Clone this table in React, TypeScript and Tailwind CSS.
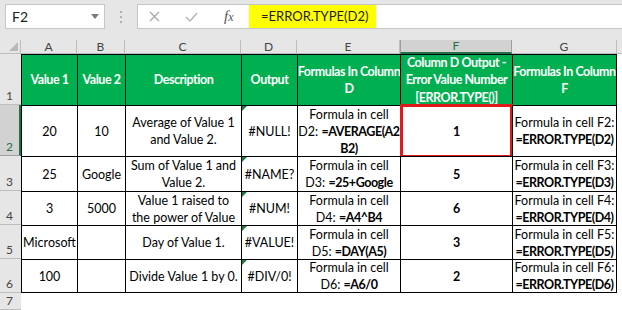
import React from "react";

type Line = React.ReactNode;

const COLS = "grid-cols-[21px_56px_48px_116px_56px_103px_112px_105px_1fr]";
const ROWS = "grid-rows-[14px_51px_51px_35px_34px_34px_34px_17px]";

function Lines({ lines }: { lines: Line[] }) {
  return (
    <div className="flex flex-col items-center">
      {lines.map((l, i) => (
        <span key={i} className="whitespace-nowrap">
          {l}
        </span>
      ))}
    </div>
  );
}

function B({ children }: { children: React.ReactNode }) {
  return <b className="font-bold tracking-[-0.45px]">{children}</b>;
}

function ColHead({ label, selected }: { label: string; selected?: boolean }) {
  return (
    <div
      className={
        selected
          ? "flex items-center justify-center bg-[#d2d2d2] border-l border-r border-[#9f9f9f] border-b-2 border-b-[#217346] text-[#217346] text-[12px]"
          : "flex items-center justify-center bg-[#e6e6e6] border-r border-[#bdbdbd] border-b border-b-[#bdbdbd] text-[#444] text-[12px]"
      }
    >
      {label}
    </div>
  );
}

function RowHead({ label, selected }: { label: string; selected?: boolean }) {
  return (
    <div
      className={
        selected
          ? "flex items-end pl-[6px] pb-[1px] bg-[#d2d2d2] border-b border-[#9f9f9f] border-r-2 border-r-[#217346] text-[#217346] text-[12px] leading-[14px]"
          : "flex items-end pl-[6px] pb-[1px] bg-[#e6e6e6] border-b border-[#bdbdbd] text-[#444] text-[12px] leading-[14px]"
      }
    >
      {label}
    </div>
  );
}

function HeadCell({ lines, last }: { lines: Line[]; last?: boolean }) {
  return (
    <div
      className={
        "flex items-center justify-center overflow-hidden bg-[#00b050] text-white font-bold tracking-[-0.45px] text-center leading-[17.5px] border-l border-t border-black" +
        (last ? " border-r" : "")
      }
    >
      <Lines lines={lines} />
    </div>
  );
}

function DataCell({
  lines,
  last,
  bottom,
  flag,
  bold,
  children,
}: {
  lines: Line[];
  last?: boolean;
  bottom?: boolean;
  flag?: boolean;
  bold?: boolean;
  children?: React.ReactNode;
}) {
  return (
    <div
      className={
        "relative flex items-center justify-center bg-white text-black text-center leading-[17px] border-l border-t border-black" +
        (last ? " border-r" : "") +
        (bottom ? " border-b" : "") +
        (bold ? " font-bold" : "")
      }
    >
      <div className="flex w-full h-full items-center justify-center overflow-hidden">
        <Lines lines={lines} />
      </div>
      {flag && (
        <div className="absolute left-0 top-0 w-0 h-0 border-t-[5px] border-r-[5px] border-t-[#1e7a3c] border-r-transparent" />
      )}
      {children}
    </div>
  );
}

type Row = {
  n: string;
  a: string;
  b: string;
  c: Line[];
  d: string;
  e: Line[];
  f: string;
  g: Line[];
};

const rows: Row[] = [
  {
    n: "2",
    a: "20",
    b: "10",
    c: ["Average of Value 1", "and Value 2."],
    d: "#NULL!",
    e: ["Formula in cell", <>D2: <B>=AVERAGE(A2</B></>, <B>B2)</B>],
    f: "1",
    g: ["Formula in cell F2:", <B>=ERROR.TYPE(D2)</B>],
  },
  {
    n: "3",
    a: "25",
    b: "Google",
    c: ["Sum of Value 1 and", "Value 2."],
    d: "#NAME?",
    e: ["Formula in cell", <>D3: <B>=25+Google</B></>],
    f: "5",
    g: ["Formula in cell F3:", <B>=ERROR.TYPE(D3)</B>],
  },
  {
    n: "4",
    a: "3",
    b: "5000",
    c: ["Value 1 raised to", "the power of Value"],
    d: "#NUM!",
    e: ["Formula in cell", <>D4: <B>=A4^B4</B></>],
    f: "6",
    g: ["Formula in cell F4:", <B>=ERROR.TYPE(D4)</B>],
  },
  {
    n: "5",
    a: "Microsoft",
    b: "",
    c: ["Day of Value 1."],
    d: "#VALUE!",
    e: ["Formula in cell", <>D5: <B>=DAY(A5)</B></>],
    f: "3",
    g: ["Formula in cell F5:", <B>=ERROR.TYPE(D5)</B>],
  },
  {
    n: "6",
    a: "100",
    b: "",
    c: ["Divide Value 1 by 0."],
    d: "#DIV/0!",
    e: ["Formula in cell", <>D6: <B>=A6/0</B></>],
    f: "2",
    g: ["Formula in cell F6:", <B>=ERROR.TYPE(D6)</B>],
  },
];

function FormulaBar() {
  return (
    <div className="flex h-[40px] bg-[#e6e6e6] pt-[4px] items-start">
      {/* name box */}
      <div className="ml-[5px] w-[100px] h-[25px] bg-white border border-[#c6c6c6] flex items-center justify-between pl-[6px] pr-[5px] text-[14px] text-[#222]">
        <span>F2</span>
        <svg width="8" height="5" viewBox="0 0 8 5">
          <path d="M0 0 L8 0 L4 5 Z" fill="#7a7a7a" />
        </svg>
      </div>
      {/* grip */}
      <div className="w-[32px] h-[25px] flex flex-col items-center justify-center gap-[3px]">
        <span className="w-[2px] h-[2px] bg-[#b0b0b0]" />
        <span className="w-[2px] h-[2px] bg-[#b0b0b0]" />
        <span className="w-[2px] h-[2px] bg-[#b0b0b0]" />
      </div>
      {/* formula box */}
      <div className="flex-1 h-[25px] bg-white border-y border-l border-[#c6c6c6] flex items-stretch">
        <div className="w-[111px] flex items-center">
          <svg className="ml-[11px]" width="11" height="11" viewBox="0 0 11 11">
            <path d="M1 1 L10 10 M10 1 L1 10" stroke="#a8a8a8" strokeWidth="1.3" />
          </svg>
          <svg className="ml-[25px]" width="13" height="10" viewBox="0 0 13 10">
            <path d="M1 5 L5 9 L12 1" stroke="#b4b4b4" strokeWidth="1.4" fill="none" />
          </svg>
          <span className="ml-[26px] text-[15px] italic text-[#555] font-['Liberation_Serif',serif]">
            f<span className="text-[12px]">x</span>
          </span>
        </div>
        <div className="w-[127px] bg-[#ffff00] flex items-center pl-[12px] text-[13px] text-[#222] whitespace-nowrap">
          =ERROR.TYPE(D2)
        </div>
      </div>
    </div>
  );
}

export default function App() {
  return (
    <div className="w-[622px] h-[310px] overflow-hidden bg-white font-['Lato',sans-serif] text-[12.5px]">
      <FormulaBar />
      <div className={`grid ${COLS} ${ROWS}`}>
        {/* column headers */}
        <div className="relative bg-[#e6e6e6] border-b border-r border-[#bdbdbd]">
          <svg className="absolute right-[2px] bottom-[2px]" width="9" height="9" viewBox="0 0 9 9">
            <path d="M9 0 L9 9 L0 9 Z" fill="#b8b8b8" />
          </svg>
        </div>
        <ColHead label="A" />
        <ColHead label="B" />
        <ColHead label="C" />
        <ColHead label="D" />
        <ColHead label="E" />
        <ColHead label="F" selected />
        <ColHead label="G" />
        <div className="bg-[#e6e6e6] border-b border-[#bdbdbd]" />

        {/* row 1: titles */}
        <RowHead label="1" />
        <HeadCell lines={["Value 1"]} />
        <HeadCell lines={["Value 2"]} />
        <HeadCell lines={["Description"]} />
        <HeadCell lines={["Output"]} />
        <HeadCell lines={["Formulas In Column", "D"]} />
        <HeadCell lines={["Column D Output -", "Error Value Number", "[ERROR.TYPE()]"]} />
        <HeadCell lines={["Formulas In Column", "F"]} last />
        <div className="bg-white" />

        {rows.map((r, i) => {
          const bottom = i === rows.length - 1;
          return (
            <React.Fragment key={r.n}>
              <RowHead label={r.n} selected={r.n === "2"} />
              <DataCell lines={[r.a]} bottom={bottom} />
              <DataCell lines={[r.b]} bottom={bottom} />
              <DataCell lines={r.c} bottom={bottom} />
              <DataCell lines={[r.d]} bottom={bottom} flag />
              <DataCell lines={r.e} bottom={bottom} />
              <DataCell lines={[r.f]} bottom={bottom} bold>
                {r.n === "2" && (
                  <>
                    <div className="absolute -left-px -top-[2px] -right-px -bottom-[2px] border-[3px] border-[#e01a1a]" />
                    <div className="absolute -right-[1px] -bottom-[2px] w-[3px] h-[3px] bg-[#404040]" />
                  </>
                )}
              </DataCell>
              <DataCell lines={r.g} bottom={bottom} last />
              <div className="bg-white" />
            </React.Fragment>
          );
        })}

        {/* row 7 */}
        <RowHead label="7" />
        <div className="col-span-8 bg-white" />
      </div>
    </div>
  );
}
